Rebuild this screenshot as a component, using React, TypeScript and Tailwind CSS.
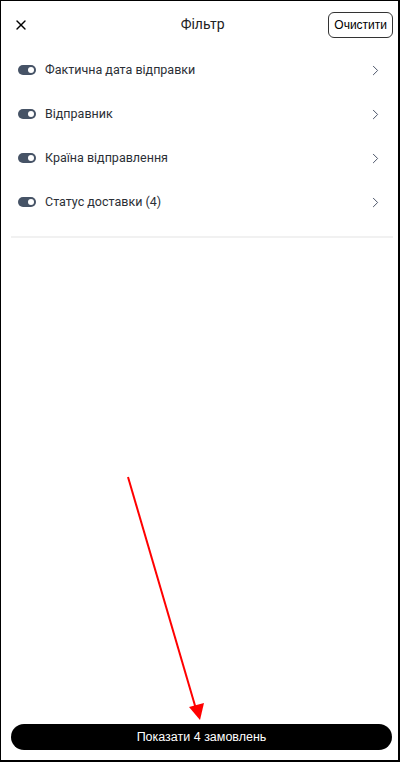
import { ChevronRight, X } from 'lucide-react';

const filters = [
  'Фактична дата відправки',
  'Відправник',
  'Країна відправлення',
  'Статус доставки (4)',
];

const Toggle = () => (
  <span className="relative inline-block h-[10px] w-[18px] rounded-full bg-[#465366]">
    <span className="absolute right-[2px] top-[2px] h-[6px] w-[6px] rounded-full bg-white" />
  </span>
);

export default function App() {
  return (
    <div className="relative flex h-[762px] w-[400px] flex-col border-b-2 border-l border-r-2 border-t border-black bg-white font-['Roboto',sans-serif] text-[#1f2937]">
      <header className="flex h-[47px] items-center justify-between pl-[12px] pr-[5px]">
        <X className="h-[16px] w-[16px] text-black" strokeWidth={2} />
        <h1 className="ml-[48px] text-[14px] text-[#222]">Фільтр</h1>
        <button className="rounded-[6px] border border-[#333] px-[5px] py-[3px] font-['Liberation_Sans',sans-serif] text-[12px] text-black">
          Очистити
        </button>
      </header>

      <ul className="pl-[17px] pr-[14px]">
        {filters.map((f) => (
          <li key={f} className="flex h-[44px] items-center">
            <Toggle />
            <span className="ml-[9px] flex-1 text-[12.5px] text-[#2b2f36]">{f}</span>
            <ChevronRight className="h-[17px] w-[17px] text-[#4b5468]" strokeWidth={1.4} />
          </li>
        ))}
      </ul>

      <div className="ml-[10px] mr-[5px] mt-[12px] h-[2px] bg-[#f1f1f1]" />

      <div className="flex-1" />

      <div className="pb-[10px] pl-[10px] pr-[6px]">
        <button className="h-[26px] w-full rounded-full bg-black font-['Liberation_Sans',sans-serif] text-[12.5px] text-white">
          Показати 4 замовлень
        </button>
      </div>

      <svg className="pointer-events-none absolute left-0 top-0" width="400" height="762">
        <line x1="127" y1="476" x2="195" y2="708" stroke="#ff0000" strokeWidth="2" />
        <polygon points="188,706 203,702 199,719" fill="#ff0000" />
      </svg>
    </div>
  );
}
